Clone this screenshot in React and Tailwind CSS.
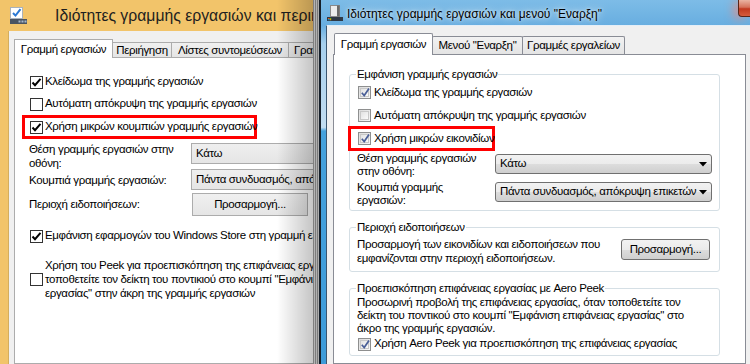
import React from "react";

const Check8 = ({ checked }) => (
  <div className="w-[13px] h-[13px] shrink-0 border border-[#333] bg-white flex items-center justify-center">
    {checked && (
      <svg width="11" height="11" viewBox="0 0 11 11">
        <path d="M1.5 5.5 L4 8.2 L9.5 1.8" stroke="#000" strokeWidth="2" fill="none" />
      </svg>
    )}
  </div>
);

const Check7 = ({ checked }) => (
  <div className="w-[13px] h-[13px] shrink-0 border border-[#8e8f8f] bg-[linear-gradient(135deg,#dcdcdc,#f6f6f6)] flex items-center justify-center">
    <div className="w-[9px] h-[9px] border border-[#c8c8c8] bg-[linear-gradient(135deg,#e2e2e2,#fbfbfb)] relative">
      {checked && (
        <svg className="absolute -left-[1px] -top-[2px]" width="11" height="11" viewBox="0 0 11 11">
          <path d="M1.8 5.8 L4.2 8.6 L9 1.5" stroke="#4a5f97" strokeWidth="1.7" fill="none" />
        </svg>
      )}
    </div>
  </div>
);

const Row8 = ({ checked, children }) => (
  <div className="h-[22px] flex items-center gap-[2px] whitespace-nowrap">
    <Check8 checked={checked} />
    <span>{children}</span>
  </div>
);

const Row7 = ({ checked, children, h = "h-[23px]" }) => (
  <div className={`${h} flex items-center gap-[3px] pl-[2px] whitespace-nowrap`}>
    <Check7 checked={checked} />
    <span>{children}</span>
  </div>
);

const Combo7 = ({ value, className }) => (
  <div
    className={`w-[217px] h-[20px] rounded-[3px] border border-[#707070] bg-[linear-gradient(to_bottom,#f2f2f2_0%,#ebebeb_50%,#dddddd_50%,#cfcfcf_100%)] flex items-center pl-[4px] pr-[4px] whitespace-nowrap ${className}`}
  >
    <span className="flex-1">{value}</span>
    <svg width="8" height="5" viewBox="0 0 8 5">
      <path d="M0 0 H8 L4 4.5 Z" fill="#000" />
    </svg>
  </div>
);

const Icon8 = () => (
  <svg width="17" height="18" viewBox="0 0 17 18">
    <rect x="0.5" y="0.5" width="12" height="11" fill="#fff" stroke="#a9b2bc" />
    <path d="M3 6 L5.5 8.6 L10.5 2.2" stroke="#2a78d4" strokeWidth="2" fill="none" />
    <rect x="0" y="12" width="17" height="5" fill="#4a5462" />
    <rect x="8.5" y="13.5" width="2" height="2" fill="#a8b8cc" />
    <rect x="11.5" y="13.5" width="2" height="2" fill="#a8b8cc" />
    <rect x="14.5" y="13.5" width="2" height="2" fill="#a8b8cc" />
  </svg>
);

const Icon7 = () => (
  <svg width="16" height="18" viewBox="0 0 16 18">
    <rect x="3.5" y="1.5" width="9" height="11" fill="#ececec" stroke="#8a8a8a" />
    <rect x="10" y="1.5" width="2.5" height="11" fill="#6a6a6a" />
    <rect x="0" y="13" width="16" height="4" fill="#2e3844" />
    <rect x="1" y="14" width="1.5" height="1" fill="#f25022" />
    <rect x="2.7" y="14" width="1.5" height="1" fill="#7fba00" />
    <rect x="1" y="15.2" width="1.5" height="1" fill="#00a4ef" />
    <rect x="2.7" y="15.2" width="1.5" height="1" fill="#ffb900" />
  </svg>
);

function Win8Window() {
  return (
    <div className="w-[313px] shrink-0 overflow-hidden bg-[#f2c46a]">
      <div className="w-[480px] h-full flex flex-col">
        <div className="h-[31px] shrink-0 flex items-center pl-[10px]">
          <Icon8 />
          <span className="ml-[28px] text-[15.75px] tracking-normal text-[#1e1e1e] whitespace-nowrap">
            Ιδιότητες γραμμής εργασιών και περιήγησης
          </span>
        </div>
        <div className="flex-1 ml-[8px] border-l border-[#d4ae5e] bg-[#f0f0f0] pl-[5px] pt-[8px] flex flex-col">
          <div className="h-[18px] flex items-end">
            <div className="relative z-10 w-[99px] h-[19px] -mb-[1px] bg-white border border-b-0 border-[#acacac] flex items-center justify-center pt-[2px] whitespace-nowrap">
              Γραμμή εργασιών
            </div>
            <div className="w-[60px] h-[15px] -ml-[1px] bg-[linear-gradient(to_bottom,#f0f0f0,#e5e5e5)] border border-b-0 border-[#acacac] flex items-center justify-center pt-[1px] whitespace-nowrap">
              Περιήγηση
            </div>
            <div className="w-[118px] h-[15px] -ml-[1px] bg-[linear-gradient(to_bottom,#f0f0f0,#e5e5e5)] border border-b-0 border-[#acacac] flex items-center justify-center pt-[1px] whitespace-nowrap">
              Λίστες συντομεύσεων
            </div>
            <div className="w-[110px] h-[15px] -ml-[1px] bg-[linear-gradient(to_bottom,#f0f0f0,#e5e5e5)] border border-b-0 border-[#acacac] flex items-center pl-[5px] pt-[1px] whitespace-nowrap">
              Γραμμές εργαλείων
            </div>
          </div>
          <div className="flex-1 bg-white border border-[#acacac] pl-[15px] pt-[13px] flex flex-col">
            <Row8 checked>Κλείδωμα της γραμμής εργασιών</Row8>
            <Row8>Αυτόματη απόκρυψη της γραμμής εργασιών</Row8>
            <div className="-ml-[8px] w-[235px] h-[24px] border-[3px] border-[#ff0000] flex items-center gap-[2px] pl-[5px] whitespace-nowrap">
              <Check8 checked />
              <span>Χρήση μικρών κουμπιών γραμμής εργασιών</span>
            </div>
            <div className="mt-[3px] flex">
              <div className="w-[162px] leading-[14px] -ml-[1px] whitespace-nowrap">
                Θέση γραμμής εργασιών στην
                <br />
                οθόνη:
              </div>
              <div className="mt-[1px] w-[220px] h-[21px] border border-[#acacac] bg-[linear-gradient(to_bottom,#efefef,#e5e5e5)] flex items-center pl-[4px]">
                Κάτω
              </div>
            </div>
            <div className="-mt-[1px] flex items-center">
              <div className="w-[162px] -ml-[1px] pt-[2px] whitespace-nowrap">Κουμπιά γραμμής εργασιών:</div>
              <div className="w-[220px] h-[21px] border border-[#acacac] bg-[linear-gradient(to_bottom,#efefef,#e5e5e5)] flex items-center pl-[4px] whitespace-nowrap">
                Πάντα συνδυασμός, απόκρυψη επικετών
              </div>
            </div>
            <div className="mt-[3px] flex items-center">
              <div className="w-[163px] -ml-[1px] whitespace-nowrap">Περιοχή ειδοποιήσεων:</div>
              <div className="w-[116px] h-[23px] border border-[#acacac] bg-[linear-gradient(to_bottom,#f0f0f0,#e5e5e5)] flex items-center justify-center whitespace-nowrap">
                Προσαρμογή...
              </div>
            </div>
            <div className="mt-[9px]">
              <Row8 checked>Εμφάνιση εφαρμογών του Windows Store στη γραμμή εργασιών</Row8>
            </div>
            <div className="mt-[11px] flex items-center gap-[2px]">
              <Check8 />
              <div className="leading-[14px] whitespace-nowrap">
                Χρήση του Peek για προεπισκόπηση της επιφάνειας εργασίας όταν
                <br />
                τοποθετείτε τον δείκτη του ποντικιού στο κουμπί "Εμφάνιση επιφάνειας
                <br />
                εργασίας" στην άκρη της γραμμής εργασιών
              </div>
            </div>
          </div>
        </div>
      </div>
    </div>
  );
}

function Win7Window() {
  return (
    <div className="relative flex-1 min-w-0 flex flex-col border-l-2 border-[#1d2b3a] bg-[linear-gradient(to_bottom,#7dbce7_0%,#68aee0_7%,#a6cfec_12%,#c2ddf1_35%,#45a1dc_36%,#3d9bd9_100%)]">
      <div className="absolute right-full top-0 bottom-0 w-[44px] pointer-events-none bg-[linear-gradient(to_right,rgba(0,0,0,0),rgba(0,0,0,0.28))]" />
      <div className="h-[25px] shrink-0 flex items-start pl-[6px]">
        <div className="mt-[4px]">
          <Icon7 />
        </div>
        <span className="ml-[4px] mt-[5px] text-[12px] tracking-normal whitespace-nowrap [text-shadow:0_0_8px_rgba(255,255,255,0.95),0_0_3px_rgba(255,255,255,0.8)]">
          Ιδιότητες γραμμής εργασιών και μενού "Εναρξη"
        </span>
        <div className="ml-auto w-[12px] h-[17px] rounded-bl-[4px] border-l border-b border-[#5b2417] bg-[linear-gradient(to_bottom,#eab4a2,#d5725a_45%,#c2391e_55%,#d65c3c)] shadow-[-5px_2px_8px_rgba(255,130,110,0.55)]" />
      </div>
      <div className="flex-1 min-h-0 ml-[5px] border-l border-t border-l-[#3b5670] border-t-[#e4eef7] bg-[#f0f0f0] pl-[6px] pt-[7px] flex flex-col overflow-hidden">
        <div className="h-[21px] flex items-end pl-[1px]">
          <div className="relative z-10 w-[99px] h-[22px] -mb-[1px] bg-white border border-b-0 border-[#898c95] rounded-t-[2px] flex items-center justify-center pt-[1px] whitespace-nowrap">
            Γραμμή εργασιών
          </div>
          <div className="w-[91px] h-[18px] -ml-[1px] bg-[linear-gradient(to_bottom,#f2f2f2,#e4e4e4)] border border-b-0 border-[#898c95] rounded-t-[2px] flex items-center justify-center pt-[1px] whitespace-nowrap">
            Μενού "Εναρξη"
          </div>
          <div className="w-[103px] h-[18px] -ml-[1px] bg-[linear-gradient(to_bottom,#f2f2f2,#e4e4e4)] border border-b-0 border-[#898c95] rounded-t-[2px] flex items-center justify-center pt-[1px] whitespace-nowrap">
            Γραμμές εργαλείων
          </div>
        </div>
        <div className="w-[413px] flex-1 bg-white border border-[#898c95] pl-[15px] flex flex-col">
          <fieldset className="mt-[12px] w-[371px] border border-[#d5dfe5] rounded-[3px] px-[6px] pb-[3px]">
            <legend className="px-[1px] leading-[14px]">Εμφάνιση γραμμής εργασιών</legend>
            <Row7 checked>Κλείδωμα της γραμμής εργασιών</Row7>
            <Row7>Αυτόματη απόκρυψη της γραμμής εργασιών</Row7>
            <div className="-mt-[1px] -ml-[8px] w-[147px] h-[25px] border-[3px] border-[#ff0000] flex items-center gap-[3px] pl-[7px] whitespace-nowrap">
              <Check7 checked />
              <span>Χρήση μικρών εικονιδίων</span>
            </div>
            <div className="mt-[1px] flex">
              <div className="w-[139px] pl-[1px] leading-[13px] whitespace-nowrap">
                Θέση γραμμής εργασιών
                <br />
                στην οθόνη:
              </div>
              <Combo7 value="Κάτω" className="mt-[2px]" />
            </div>
            <div className="mt-[3px] flex">
              <div className="w-[139px] pl-[1px] leading-[13px] whitespace-nowrap">
                Κουμπιά γραμμής
                <br />
                εργασιών:
              </div>
              <Combo7 value="Πάντα συνδυασμός, απόκρυψη επικετών" className="mt-[1px]" />
            </div>
          </fieldset>
          <fieldset className="mt-[9px] w-[371px] border border-[#d5dfe5] rounded-[3px] px-[6px] pb-[6px]">
            <legend className="px-[1px] leading-[14px]">Περιοχή ειδοποιήσεων</legend>
            <div className="pt-[3px] flex items-start">
              <div className="pl-[1px] leading-[14px] whitespace-nowrap">
                Προσαρμογή των εικονιδίων και ειδοποιήσεων που
                <br />
                εμφανίζονται στην περιοχή ειδοποιήσεων.
              </div>
              <div className="ml-auto mr-[3px] mt-[2px] w-[89px] h-[21px] rounded-[3px] border border-[#707070] bg-[linear-gradient(to_bottom,#f2f2f2_0%,#ebebeb_50%,#dddddd_50%,#cfcfcf_100%)] flex items-center justify-center whitespace-nowrap">
                Προσαρμογή...
              </div>
            </div>
          </fieldset>
          <fieldset className="mt-[9px] w-[371px] border border-[#d5dfe5] rounded-[3px] px-[6px] pb-[2px]">
            <legend className="px-[1px] leading-[14px]">Προεπισκόπηση επιφάνειας εργασίας με Aero Peek</legend>
            <div className="pt-[1px] pl-[1px] leading-[13px] whitespace-nowrap">
              Προσωρινή προβολή της επιφάνειας εργασίας, όταν τοποθετείτε τον
              <br />
              δείκτη του ποντικού στο κουμπί "Εμφάνιση επιφάνειας εργασίας" στο
              <br />
              άκρο της γραμμής εργασιών.
            </div>
            <Row7 checked h="h-[18px]">
              Χρήση Aero Peek για προεπισκόπηση της επιφάνειας εργασίας
            </Row7>
          </fieldset>
        </div>
      </div>
    </div>
  );
}

export default function App() {
  return (
    <div className="flex w-[750px] h-[364px] overflow-hidden bg-white text-[11.5px] tracking-[-0.35px] text-black font-['Liberation_Sans',Arial,sans-serif]">
      <Win8Window />
      <div className="w-[6px] shrink-0 bg-[repeating-linear-gradient(to_right,#a4a4a4_0px,#a4a4a4_1px,#ececec_1px,#ececec_2px)]" />
      <Win7Window />
    </div>
  );
}
